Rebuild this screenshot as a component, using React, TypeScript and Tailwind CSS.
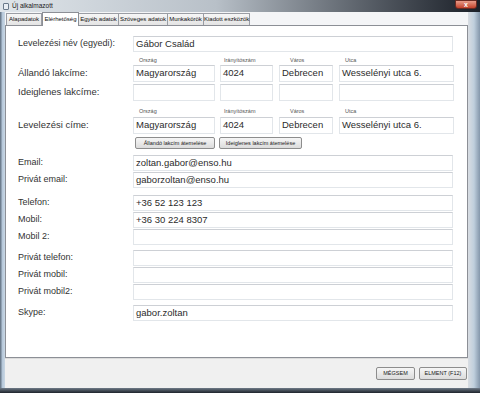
import React from 'react'

const font = { fontFamily: '"Liberation Sans", Arial, sans-serif' }

function Field({ value = '', className = '' }: { value?: string; className?: string }) {
  return (
    <div
      className={`h-[16px] border border-[#e2e6ea] border-t-[#cdd0d5] bg-white pl-[2px] text-[9.5px] leading-[14px] text-[#2b2b2b] whitespace-nowrap overflow-hidden ${className}`}
    >
      {value}
    </div>
  )
}

function Row({
  label,
  value,
  big,
  className = '',
}: {
  label: string
  value?: string
  big?: boolean
  className?: string
}) {
  return (
    <div className={`flex items-center ${className}`}>
      <div className={`w-[115px] text-[#333] ${big ? 'text-[9.5px]' : 'text-[9px]'}`}>{label}</div>
      <Field value={value} className="w-[320px]" />
    </div>
  )
}

function AddressRow({
  label,
  values,
  className = '',
}: {
  label: string
  values: string[]
  className?: string
}) {
  return (
    <div className={`flex items-center ${className}`}>
      <div className="w-[115px] text-[9.5px] text-[#333]">{label}</div>
      <div className="flex">
        <Field value={values[0]} className="w-[82px] h-[17px]" />
        <Field value={values[1]} className="w-[53px] ml-[5px] h-[17px]" />
        <Field value={values[2]} className="w-[54px] ml-[6px] h-[17px]" />
        <Field value={values[3]} className="w-[115px] ml-[6px] h-[17px]" />
      </div>
    </div>
  )
}

function SmallLabels({ className = '' }: { className?: string }) {
  return (
    <div className={`flex h-[8px] items-end pl-[115px] text-[5.5px] leading-[8px] text-[#555] ${className}`}>
      <span className="w-[82px] pl-[6px]">Ország</span>
      <span className="w-[59px] pl-[9px]">Irányítószám</span>
      <span className="w-[60px] pl-[16px]">Város</span>
      <span className="pl-[11px]">Utca</span>
    </div>
  )
}

function Btn({ children, className = '' }: { children: React.ReactNode; className?: string }) {
  return (
    <div
      className={`flex items-center justify-center whitespace-nowrap rounded-[2px] border border-[#8d8d8d] bg-gradient-to-b from-[#f6f6f6] to-[#dcdcdc] text-[5.5px] text-[#1a1a1a] ${className}`}
    >
      {children}
    </div>
  )
}

const tabs = ['Alapadatok', 'Elérhetőség', 'Egyéb adatok', 'Szöveges adatok', 'Munkakörök', 'Kiadott eszközök']
const tabW = [36, 37, 41, 50, 37, 47]

export default function App() {
  return (
    <div style={font} className="w-[480px] h-[393px] flex flex-col overflow-hidden bg-[#2a3340]">
      {/* title bar */}
      <div className="h-[12px] flex items-center bg-gradient-to-r from-[#dfe5ea] via-[#b8c0c8] via-45% to-[#1b2028] relative">
        <div className="ml-[3px] w-[6px] h-[7px] border border-[#6b7a8a] bg-[#e9eef3] rounded-[1px]" />
        <span className="ml-[3px] text-[6.5px] text-[#1a1a1a]">Új alkalmazott</span>
        <div className="absolute right-[3px] top-0 w-[22px] h-[9px] rounded-b-[3px] bg-gradient-to-b from-[#e79a88] to-[#c3402a] border border-[#6b2a22] flex items-center justify-center text-[7px] leading-none text-white font-bold">
          x
        </div>
      </div>

      <div className="flex flex-1">
        <div className="w-[5px] bg-gradient-to-r from-[#5d6c7c] via-[#b6c8da] to-[#c9d7e4]" />
        <div className="flex-1 flex flex-col bg-[#f0f0f0]">
          {/* tabs */}
          <div className="h-[13px] flex items-end bg-[#f4f5f7] pl-[1px]">
            {tabs.map((t, i) =>
              i === 1 ? (
                <div
                  key={t}
                  style={{ width: tabW[i] }}
                  className="h-[14px] -mb-[1px] relative z-10 whitespace-nowrap border border-b-0 border-[#8c8f96] bg-white text-[6px] leading-[12px] text-center text-[#111]"
                >
                  {t}
                </div>
              ) : (
                <div
                  key={t}
                  style={{ width: tabW[i] }}
                  className="h-[12px] whitespace-nowrap border border-b-0 border-[#9a9da4] -ml-px first:ml-0 bg-gradient-to-b from-[#f6f6f6] to-[#e4e4e4] text-[6px] leading-[11px] text-center text-[#111]"
                >
                  {t}
                </div>
              )
            )}
          </div>

          {/* content */}
          <div className="h-[333px] bg-white border border-[#8c8f96] pl-[12px]">
            <Row label="Levelezési név (egyedi):" value="Gábor Család" className="mt-[10px]" />
            <SmallLabels className="mt-[4px]" />
            <AddressRow
              label="Állandó lakcíme:"
              values={['Magyarország', '4024', 'Debrecen', 'Wesselényi utca 6.']}
              className="mt-[1px]"
            />
            <AddressRow label="Ideiglenes lakcíme:" values={['', '', '', '']} className="mt-[2px]" />
            <SmallLabels className="mt-[6px]" />
            <AddressRow
              label="Levelezési címe:"
              values={['Magyarország', '4024', 'Debrecen', 'Wesselényi utca 6.']}
              className="mt-[2px]"
            />
            <div className="flex mt-[3px] pl-[117px] gap-[4px]">
              <Btn className="w-[80px] h-[12px]">Állandó lakcím átemelése</Btn>
              <Btn className="w-[83px] h-[12px]">Ideiglenes lakcím átemelése</Btn>
            </div>
            <Row label="Email:" value="zoltan.gabor@enso.hu" className="mt-[6px]" />
            <Row label="Privát email:" value="gaborzoltan@enso.hu" className="mt-[1px]" />
            <Row label="Telefon:" value="+36 52 123 123" className="mt-[7px]" />
            <Row label="Mobil:" value="+36 30 224 8307" className="mt-[1px]" />
            <Row label="Mobil 2:" className="mt-[1px]" />
            <Row label="Privát telefon:" className="mt-[5px]" />
            <Row label="Privát mobil:" className="mt-[1px]" />
            <Row label="Privát mobil2:" className="mt-[1px]" />
            <Row label="Skype:" value="gabor.zoltan" className="mt-[5px]" />
          </div>

          {/* footer */}
          <div className="flex-1 flex items-center justify-end gap-[4px] pr-[1px] border-t border-[#dcdcdc]">
            <Btn className="w-[39px] h-[13px]">MÉGSEM</Btn>
            <Btn className="w-[48px] h-[13px]">ELMENT (F12)</Btn>
          </div>
        </div>
        <div className="w-[12px] bg-gradient-to-r from-[#d9dde2] via-[#bfcfdd] to-[#8497ab]" />
      </div>
      <div className="h-[5px] bg-gradient-to-b from-[#6f7b88] to-[#1e242c]" />
    </div>
  )
}
